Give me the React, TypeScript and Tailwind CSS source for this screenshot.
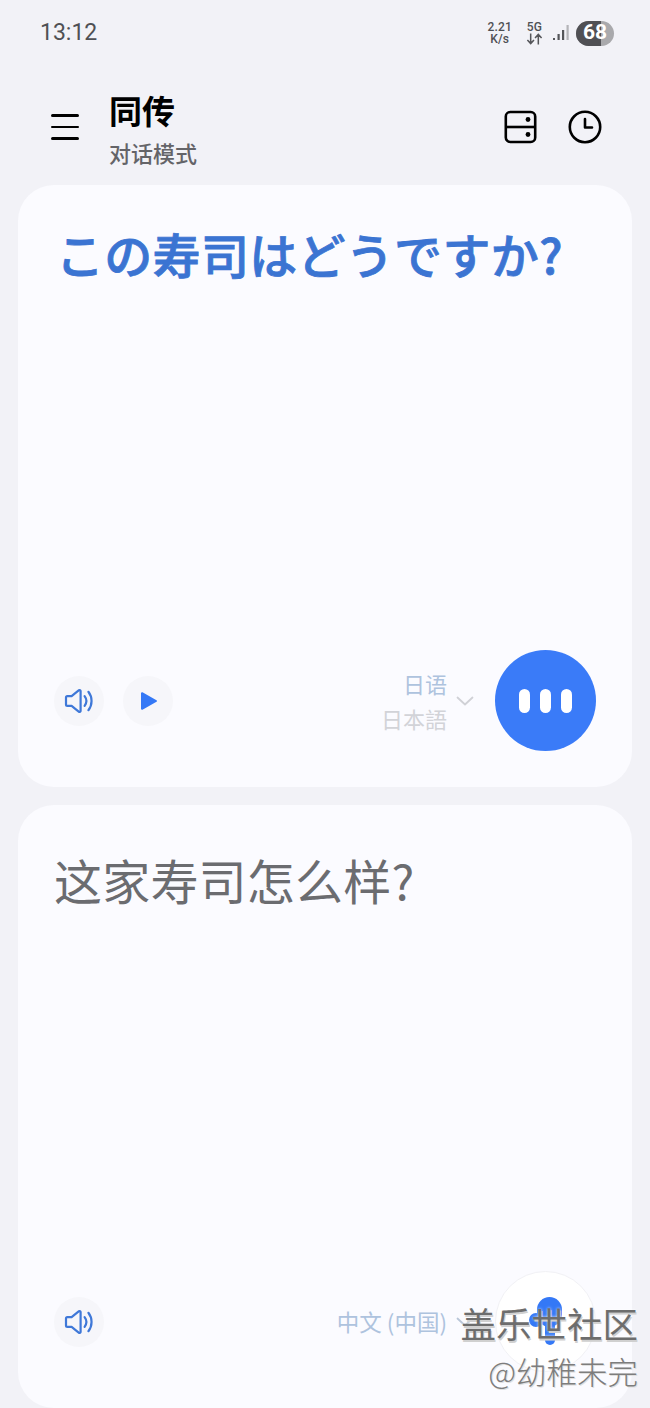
const cjk = "font-['Noto_Sans_CJK_SC','Noto_Sans',sans-serif]";

function Speaker() {
  return (
    <svg width="30" height="26" viewBox="0 0 30 26" fill="none" stroke="#3f78d8" strokeWidth="2.2" strokeLinecap="round" strokeLinejoin="round">
      <path d="M2 9.5c0-.8.6-1.4 1.4-1.4h4.2L15 2.2c.7-.5 1.6 0 1.6.8v20c0 .8-.9 1.3-1.6.8l-7.4-5.9H3.4c-.8 0-1.4-.6-1.4-1.4z" />
      <path d="M20.6 8.2c2.2 2.9 2.2 6.7 0 9.6" />
      <path d="M24.4 3.8c4.2 5.4 4.2 13 0 18.4" />
    </svg>
  );
}

function RoundButton({ children }: { children: React.ReactNode }) {
  return (
    <div className="flex h-[50px] w-[50px] items-center justify-center rounded-full bg-[#f6f6fa]">
      {children}
    </div>
  );
}

function Chevron({ color }: { color: string }) {
  return (
    <svg width="18" height="10" viewBox="0 0 18 10" fill="none" stroke={color} strokeWidth="1.8" strokeLinecap="round" strokeLinejoin="round">
      <path d="M1.5 1.5 9 8.5l7.5-7" />
    </svg>
  );
}

function StatusBar() {
  return (
    <div className="flex h-[66px] items-center justify-between pl-[40px] pr-[36px] text-[#4f5054]">
      <span className="mt-[1px] font-['Roboto',sans-serif] text-[23px]">13:12</span>
      <div className="flex items-center">
        <div className="flex flex-col items-center font-['Roboto',sans-serif] text-[12px] font-medium leading-[12px] tracking-[0.2px]">
          <span>2.21</span>
          <span>K/s</span>
        </div>
        <div className="ml-[14px] flex flex-col items-center font-['Roboto',sans-serif] text-[12px] font-medium leading-[12px] tracking-[0.2px]">
          <span>5G</span>
          <svg width="17" height="12" viewBox="0 0 15 11" fill="none" stroke="#55565a" strokeWidth="1.4">
            <path d="M4 0.5v9M1 6.5l3 3.2 3-3.2M11 10.5v-9M8 4.5l3-3.2 3 3.2" />
          </svg>
        </div>
        <svg className="ml-[10px]" width="18" height="18" viewBox="0 0 18 18" fill="#55565a">
          <rect x="0" y="14" width="2" height="2" />
          <rect x="4.5" y="10" width="2.2" height="6" />
          <rect x="9" y="6" width="2.2" height="10" />
          <rect x="13.5" y="1" width="2.2" height="15" fill="#b4b4b8" />
        </svg>
        <div className="relative ml-[5px] flex h-[25px] w-[38px] items-center justify-center overflow-hidden rounded-full bg-[#a9a9ac]">
          <div className="absolute inset-y-0 left-0 w-[25px] bg-[#505054]" />
          <span className="relative font-['Roboto',sans-serif] text-[21px] font-bold text-white">68</span>
        </div>
      </div>
    </div>
  );
}

function Header() {
  return (
    <div className="flex h-[119px] items-start pl-[51px] pr-[48px]">
      <div className="mt-[48px] flex w-[28px] flex-col gap-[9px]">
        <div className="h-[2.5px] rounded-full bg-black" />
        <div className="h-[2.5px] rounded-full bg-black" />
        <div className="h-[2.5px] rounded-full bg-black" />
      </div>
      <div className={`ml-[30px] flex-1 ${cjk}`}>
        <div className="mt-[24px] text-[33px] font-bold leading-[40px] text-black">同传</div>
        <div className="mt-[8px] text-[22px] font-medium leading-[28px] text-[#646468]">对话模式</div>
      </div>
      <svg className="mt-[44px]" width="33" height="34" viewBox="0 0 33 34" fill="none" stroke="#000" strokeWidth="2.6">
        <rect x="1.8" y="2" width="29.4" height="30" rx="4.5" />
        <path d="M1.8 17h29.4" />
        <circle cx="24" cy="9.5" r="2.4" fill="#000" stroke="none" />
        <circle cx="24" cy="24.5" r="2.4" fill="#000" stroke="none" />
      </svg>
      <svg className="ml-[31px] mt-[44px]" width="34" height="34" viewBox="0 0 34 34" fill="none" stroke="#000" strokeWidth="2.6" strokeLinecap="round" strokeLinejoin="round">
        <circle cx="17" cy="17" r="15.2" />
        <path d="M17 9v8.5h7" />
      </svg>
    </div>
  );
}

export default function App() {
  return (
    <div className="relative h-[1408px] w-[650px] overflow-hidden bg-[#f2f2f7]">
      <StatusBar />
      <Header />

      {/* top card: Japanese side */}
      <div className="mx-[18px] flex h-[602px] flex-col rounded-[36px] bg-[#fbfbff] pb-[36px] pl-[36px] pr-[36px]">
        <div className="mt-[38px] flex-1 pl-[2px] font-['Noto_Sans_CJK_JP',sans-serif] text-[48px] font-medium leading-[60px] tracking-[0.3px] text-[#3b74d2] [-webkit-text-stroke:0.8px_#3b74d2]">
          この寿司はどうですか?
        </div>
        <div className="flex items-center">
          <RoundButton>
            <Speaker />
          </RoundButton>
          <div className="ml-[19px]">
            <RoundButton>
              <svg className="ml-[2px]" width="18" height="20" viewBox="0 0 18 20" fill="#3478f6" stroke="#3478f6" strokeWidth="2" strokeLinejoin="round">
                <path d="M2 2.2v15.6L16 10z" />
              </svg>
            </RoundButton>
          </div>
          <div className={`ml-auto flex flex-col items-end text-[22px] leading-[35px] ${cjk}`}>
            <span className="text-[#aec3de]">日语</span>
            <span className="text-[#d2d3d8]">日本語</span>
          </div>
          <div className="ml-[9px] mr-[21px]">
            <Chevron color="#d0d1d6" />
          </div>
          <div className="flex h-[101px] w-[101px] items-center justify-center gap-[10px] rounded-full bg-[#3a7bf8]">
            <div className="h-[24px] w-[11px] rounded-full bg-white" />
            <div className="h-[24px] w-[11px] rounded-full bg-white" />
            <div className="h-[24px] w-[11px] rounded-full bg-white" />
          </div>
        </div>
      </div>

      {/* bottom card: Chinese side */}
      <div className="mx-[18px] mt-[18px] flex h-[603px] flex-col rounded-[36px] bg-[#fbfbff] pb-[36px] pl-[36px] pr-[36px]">
        <div className={`mt-[44px] flex-1 text-[48px] leading-[60px] tracking-[0.2px] text-[#6b6c70] ${cjk}`}>这家寿司怎么样?</div>
        <div className="flex items-center">
          <RoundButton>
            <Speaker />
          </RoundButton>
          <span className={`ml-auto text-[22.5px] text-[#aec3de] ${cjk}`}>中文 (中国)</span>
          <div className="ml-[9px] mr-[21px]">
            <Chevron color="#b9c6d8" />
          </div>
          <div className="flex h-[101px] w-[101px] items-center justify-center rounded-full border border-[#f1f1f5] bg-white">
            <svg width="36" height="50" viewBox="0 0 36 50" fill="#3478f6">
              <rect x="9" y="0" width="25" height="30" rx="12.5" />
              <rect x="1" y="16" width="14" height="14" rx="7" />
              <rect x="17" y="24" width="10" height="24" rx="5" />
            </svg>
          </div>
        </div>
      </div>

      {/* community watermark */}
      <div className={`absolute right-[12px] top-[1303px] flex flex-col items-end ${cjk}`}>
        <span className="text-[35.5px] leading-[40px] text-[#6d6d6d] [text-shadow:1px_2px_0_#d0d0d0,0_0_3px_rgba(255,255,255,0.9)]">盖乐世社区</span>
        <span className="mt-[10px] text-[30.5px] font-light leading-[36px] text-[#7d7d7d] [text-shadow:1px_1px_0_#e0e0e0]">@幼稚未完</span>
      </div>
    </div>
  );
}
